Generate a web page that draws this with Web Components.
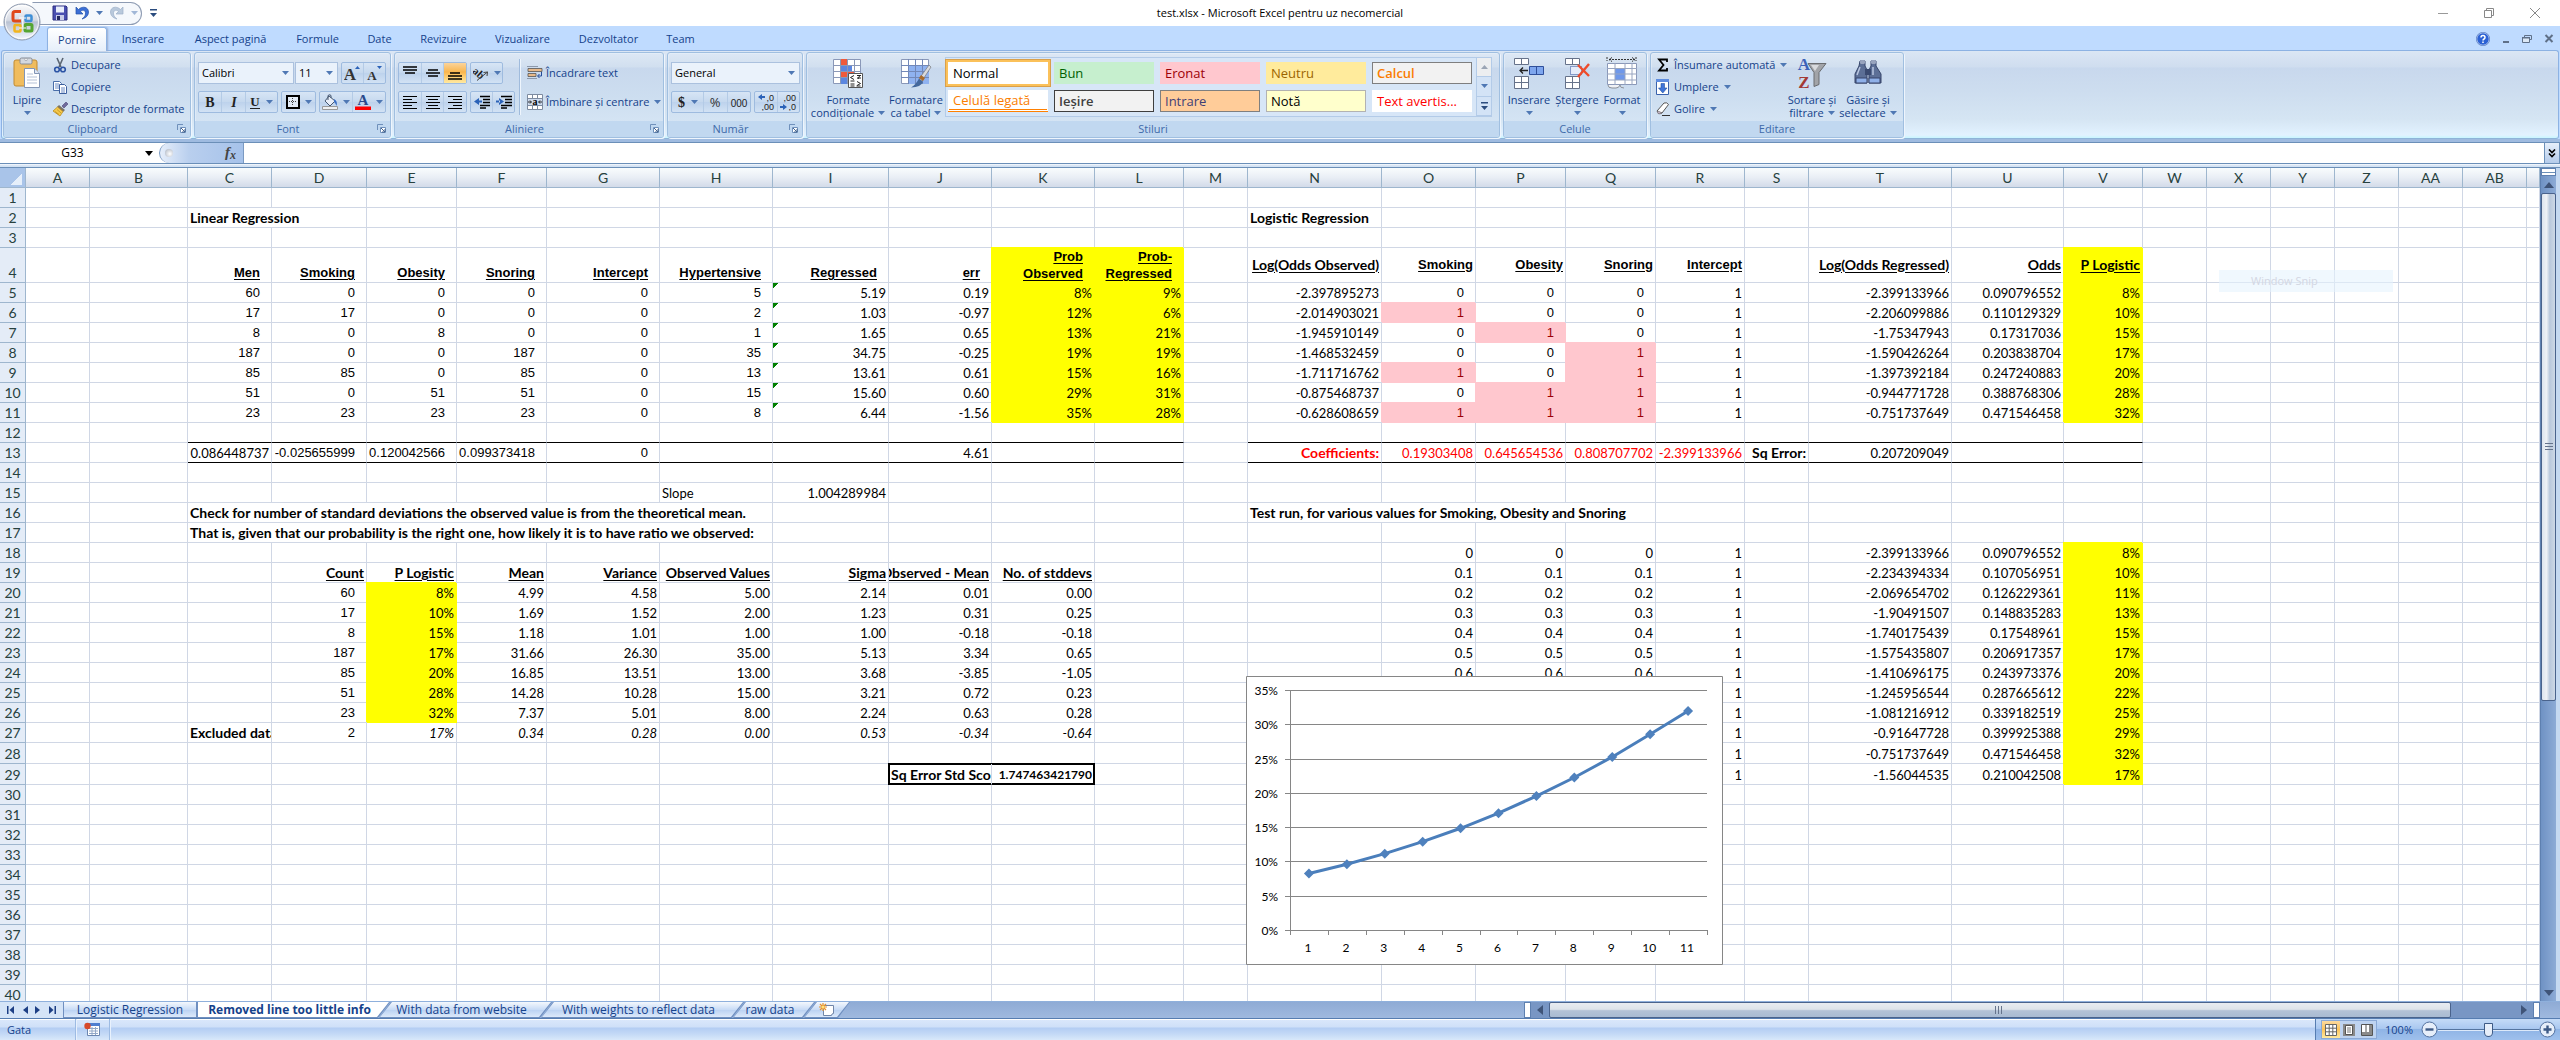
<!DOCTYPE html>
<html lang="ro">
<head>
<meta charset="utf-8">
<title>test.xlsx - Microsoft Excel pentru uz necomercial</title>
<style>
  html, body { margin: 0; height: 100%; overflow: hidden; }
  body {
    --ui: "Open Sans", "Noto Sans", sans-serif;
    --sheet: Lato, "Open Sans", sans-serif;
    --arial: "Liberation Sans", sans-serif;
    --ink: #15428b;
    font: 11px/14px var(--ui);
    color: var(--ink);
    background: #fff;
  }
</style>
</head>
<body>
<excel-window></excel-window>

<script>
const ICONS = {
  save: [16, 16, '<path d="M1 1h13l1 1v13H1z" fill="#4a4fb0" stroke="#2c2f80"/><path d="M4 1.500h8v6H4z" fill="#e9eefb"/><path d="M4 10h8v5H4z" fill="#c8cce8"/><path d="M5 11h3v4H5z" fill="#24285f"/>'],
  undo: [16, 16, '<path d="M2 2v7h7L6.500 6.500C9 4 12 5.500 11.500 9c-.3 2-1.500 3.500-3.500 5 4-1 6.500-3.500 6.500-7C14.500 2 8.500.5 4.500 4.500z" fill="#3b6fd6" stroke="#2450a8" stroke-width=".7"/>'],
  redo: [16, 16, '<path d="M14 2v7H7l2.500-2.500C7 4 4 5.500 4.500 9c.3 2 1.500 3.500 3.500 5-4-1-6.500-3.500-6.500-7C1.500 2 7.500.5 11.500 4.500z" fill="#b9c9dc" stroke="#9db0c8" stroke-width=".7"/>'],
  arrow: [7, 4, '<path d="M0 0h7L3.500 4z" fill="#4f78b4"/>'],
  blackarrow: [8, 5, '<path d="M0 0h8L4 5z" fill="#000"/>'],
  more: [7, 8, '<path d="M0 0h7v1.500H0zM0 4h7L3.500 8z" fill="#2b4c7e"/>'],
  office: [38, 38, '<defs><linearGradient id="g" x2="0" y2="1"><stop offset="0" stop-color="#fdfdfe"/><stop offset=".45" stop-color="#d5dae4"/><stop offset=".5" stop-color="#b9c2d2"/><stop offset="1" stop-color="#f4f8ff"/></linearGradient></defs><circle cx="19" cy="19" r="18" fill="url(#g)" stroke="#8b97ac"/><circle cx="19" cy="19" r="16.500" fill="none" stroke="#fff" opacity=".8"/><g fill="none" stroke-width="3"><path d="M18 8.500h-6q-2 0-2 2v5.500q0 2 2 2h6" stroke="#e0491b"/><rect x="22.500" y="12.500" width="6" height="5.500" rx="1" stroke="#3f8fd6" stroke-width="2.500"/><rect x="11.500" y="22" width="6" height="6.500" rx="1" stroke="#f2b51e" stroke-width="2.500"/><rect x="22" y="21.500" width="7" height="6.500" rx="1" stroke="#55a532"/></g><path d="M16 15h7M19.800 16v8M16 25h7" stroke="#fff" stroke-width="1.200"/>'],
  min: [12, 12, '<path d="M1 6.500h10" stroke="#999"/>'],
  restore: [12, 12, '<path d="M1.500 3.500h7v7h-7zM3.500 3V1.500h7v7H9" fill="none" stroke="#888"/>'],
  close: [12, 12, '<path d="M1 1l10 10M11 1L1 11" stroke="#888"/>'],
  help: [14, 14, '<circle cx="7" cy="7" r="6.300" fill="#2c62d4" stroke="#fff" stroke-width=".8"/><circle cx="7" cy="7" r="6.700" fill="none" stroke="#2a58b0" stroke-width=".6"/><path d="M5 5.500Q5 3.600 7 3.600t2 1.800q0 1-1 1.600T7 8.600M7 9.600v1.300" fill="none" stroke="#fff" stroke-width="1.500"/>'],
  mmin: [8, 8, '<path d="M1 6h6v2H1z" fill="#5f7088"/>'],
  mrestore: [10, 8, '<path d="M2.500 2V.5h7v4H8" fill="none" stroke="#5f7088"/><path d="M.5 2.500h7v5h-7z" fill="#dce8f6" stroke="#5f7088"/><path d="M0 2h8v1.500H0z" fill="#5f7088"/>'],
  mclose: [10, 9, '<path d="M1.500 1l7 7M8.500 1l-7 7" stroke="#5f7088" stroke-width="2"/>'],
  paste: [28, 32, '<rect x="1" y="3" width="23" height="26" rx="2" fill="#f0bc5e" stroke="#c08a32"/><rect x="7" y="1" width="12" height="6" rx="1.500" fill="#d4d8de" stroke="#868c96"/><circle cx="13" cy="2.500" r="1.200" fill="#fff" stroke="#868c96" stroke-width=".6"/><path d="M11.500 11.500h10l5 5v14h-15z" fill="#fff" stroke="#8295b5"/><path d="M21.500 11.500v5h5" fill="#dfe6f2" stroke="#8295b5"/><path d="M14 17h6M14 20h10M14 23h10M14 26h10" stroke="#b5c1d6"/>'],
  cut: [16, 16, '<path d="M5 1l4 9M11 1L7 10" stroke="#5b6572" stroke-width="1.600"/><circle cx="5" cy="12.500" r="2.300" fill="none" stroke="#2b53a4" stroke-width="1.600"/><circle cx="11" cy="12.500" r="2.300" fill="none" stroke="#2b53a4" stroke-width="1.600"/>'],
  copy: [16, 16, '<path d="M1.500 2.500h6l2 2v7h-8z" fill="#fff" stroke="#4a6ea9"/><path d="M3 5h4M3 7h5M3 9h5" stroke="#6c8cc4"/><path d="M7.500 5.500h5l2 2v7h-7z" fill="#fff" stroke="#3c5f9e"/><path d="M9 9h4M9 11h4M9 13h4" stroke="#6c8cc4"/>'],
  painter: [16, 16, '<path d="M10 5l4-4 2 2-4 4z" fill="#6f6a9b" stroke="#4a4578" stroke-width=".6"/><path d="M7 4l6 5-2 2-6-5z" fill="#7b7466"/><path d="M5.500 6l5.500 4.500L8 15 1 10z" fill="#f5c94b" stroke="#b98b1e" stroke-width=".8"/><path d="M3 10.500l4 3M5 8.500l4 3.500" stroke="#b98b1e" stroke-width=".7"/>'],
  bold: [12, 14, '<text x="6" y="12" font-family="Liberation Serif,serif" font-weight="bold" font-size="14" text-anchor="middle" fill="#222">B</text>'],
  italic: [12, 14, '<text x="6" y="12" font-family="Liberation Serif,serif" font-style="italic" font-weight="bold" font-size="14" text-anchor="middle" fill="#222">I</text>'],
  underline: [12, 14, '<text x="6" y="11" font-family="Liberation Serif,serif" font-weight="bold" font-size="13" text-anchor="middle" fill="#222">U</text><path d="M1 13.500h10" stroke="#222"/>'],
  grow: [17, 16, '<text x="6" y="15" font-family="Liberation Serif,serif" font-weight="bold" font-size="17" text-anchor="middle" fill="#333">A</text><path d="M11 4h5l-2.500-3z" fill="#2b62b8"/>'],
  shrink: [17, 16, '<text x="6" y="15" font-family="Liberation Serif,serif" font-weight="bold" font-size="13" text-anchor="middle" fill="#333">A</text><path d="M11 1h5l-2.500 3z" fill="#2b62b8"/>'],
  border: [14, 14, '<path d="M1 1h12v12H1z" fill="#fff" fill-opacity=".5" stroke="#000" stroke-width="2"/><path d="M6.500 3v8M3 6.500h8" stroke="#444" stroke-dasharray="1 1"/>'],
  fill: [16, 16, '<path d="M7 2l6 5-5 5-5-5z" fill="#e8eef8" stroke="#44566f"/><path d="M6 6V1.500q2-1.500 3 0V4" fill="none" stroke="#44566f"/><path d="M12 5q4 2 2.500 7-1-3-2.500-4z" fill="#3a6fc4"/><path d="M.5 12.500h15v3H.5z" fill="#eef0f2" stroke="#999"/>'],
  fontcolor: [16, 16, '<text x="8" y="11" font-family="Liberation Serif,serif" font-weight="bold" font-size="15" text-anchor="middle" fill="#2a4a8c">A</text><path d="M0 12.500h16v3.500H0z" fill="#f00"/>'],
  vtop: [14, 14, '<path d="M0 1h14M0 4h14M2 7h10" stroke="#000" stroke-width="1.600"/>'],
  vmid: [14, 14, '<path d="M2 4h10M0 7h14M2 10h10" stroke="#000" stroke-width="1.600"/>'],
  vbot: [14, 14, '<path d="M2 7h10M0 10h14M0 13h14" stroke="#000" stroke-width="1.600"/>'],
  left: [14, 14, '<path d="M0 1.500h14M0 4.500h9M0 7.500h14M0 10.500h9M0 13.500h14" stroke="#000"/>'],
  center: [14, 14, '<path d="M0 1.500h14M2 4.500h10M0 7.500h14M2 10.500h10M0 13.500h14" stroke="#000"/>'],
  right: [14, 14, '<path d="M0 1.500h14M5 4.500h9M0 7.500h14M5 10.500h9M0 13.500h14" stroke="#000"/>'],
  outdent: [16, 14, '<path d="M6 1.500h10M9 4.500h7M9 7.500h7M6 10.500h10M6 13h6" stroke="#000" stroke-width="1.500"/><path d="M5 3v7L0 6.500zM4 5.500h4v2H4z" fill="#2b62b8"/>'],
  indent: [16, 14, '<path d="M5 1.500h11M9 4.500h7M9 7.500h7M5 10.500h11M5 13h6" stroke="#000" stroke-width="1.500"/><path d="M3 3v7l5-3.500zM0 5.500h4v2H0z" fill="#2b62b8"/>'],
  orient: [16, 16, '<text x="0" y="12" font-family="Liberation Serif,serif" font-weight="bold" font-size="11" fill="#222" transform="rotate(42 6 8)">ab</text><path d="M4 15.500L14.500 7M14.500 7l-4 .5M14.500 7l-.5 4" stroke="#444" fill="none"/>'],
  wrap: [16, 16, '<path d="M0 1.500h11M0 13.500h10" stroke="#8d99ab"/><path d="M1 3.500h14v3H1zM1 8.500h8v3H1z" fill="#e8b98a" stroke="#555" stroke-width=".8"/><path d="M14.500 7v4H11M12.500 9l-2 2 2 2" fill="none" stroke="#234a98"/>'],
  merge: [16, 16, '<path d="M.5.5h15v15H.5zM.5 4.500h15M.5 11.500h15M5.500 0v4M10.500 0v4M5.500 12v4M10.500 12v4" fill="#fff" stroke="#7d8ba0"/><path d="M1 5h14v6H1z" fill="#cfdcf0"/><path d="M1 8h3M12 8h3M3 6.500L4.500 8 3 9.500M13 6.500L11.500 8 13 9.500" stroke="#222" fill="none"/><text x="8" y="11" font-family="Liberation Serif,serif" font-weight="bold" font-size="10" text-anchor="middle" fill="#000">a</text>'],
  launch: [9, 9, '<path d="M.5 6V.5H6" fill="none" stroke="#6f90bb"/><path d="M3.500 3.500h5v5h-5z" fill="#fff" stroke="#6f90bb"/><path d="M4 4l4 4V5M8 8H5" stroke="#45648f" fill="none"/>'],
  dollar: [9, 14, '<text x="4.500" y="12" font-family="Liberation Serif,serif" font-weight="bold" font-size="14" text-anchor="middle" fill="#222">$</text>'],
  percent: [14, 14, '<text x="7" y="12" font-family="Open Sans,sans-serif" font-size="13" text-anchor="middle" fill="#333">%</text>'],
  zeros: [18, 14, '<text x="9" y="12" font-family="Liberation Sans,sans-serif" font-size="10" text-anchor="middle" fill="#222">000</text>'],
  decinc: [18, 18, '<text x="17" y="8" font-family="Liberation Sans,sans-serif" font-size="9" text-anchor="end" fill="#222">,0</text><text x="17" y="17" font-family="Liberation Sans,sans-serif" font-size="9" text-anchor="end" fill="#222">,00</text><path d="M1 4l4-3v2h3v2H5v2z" fill="#2b62b8"/>'],
  decdec: [18, 18, '<text x="17" y="8" font-family="Liberation Sans,sans-serif" font-size="9" text-anchor="end" fill="#222">,00</text><text x="17" y="17" font-family="Liberation Sans,sans-serif" font-size="9" text-anchor="end" fill="#222">,0</text><path d="M8 14l-4-3v2H1v2h3v2z" fill="#2b62b8"/>'],
  condfmt: [32, 32, '<path d="M1.500 2.500h27v24h-27z" fill="#fff" stroke="#8a98b8"/><path d="M8 2h7v6H8zM8 14h14v6H8z" fill="#ef5a3c"/><path d="M8 8h12v6H8zM8 20h7v7H8z" fill="#5b86e0"/><path d="M1 8.500h28M1 14.500h28M1 20.500h28M8.500 2v25M15.500 2v25M22.500 2v25" stroke="#8a98b8"/><path d="M16.500 16.500h14v14h-14z" fill="#fff" stroke="#555"/><path d="M22 18.500l-3.500 2 3.500 2M18.500 24h4M25 18.500h4M25 21h4M28 18l-2 4M25 24.500l3.500 2-3.500 2M18.500 27h4M18.500 29h4M24.500 29h4" stroke="#222" fill="none"/>'],
  fmttable: [32, 32, '<path d="M1.500 2.500h27v24h-27z" fill="#fff" stroke="#8a98b8"/><path d="M8 8h21v19H8z" fill="#8fb2f0"/><path d="M1 8.500h28M1 14.500h28M1 20.500h28M8.500 2v25M15.500 2v25M22.500 2v25" stroke="#7288b8"/><path d="M29 8l2 2-9 14-3-2z" fill="#d9dade" stroke="#77787c" stroke-width=".7"/><path d="M19 21.500l4 3.500q-2 5-12 5.500 5-3 8-9z" fill="#44689c"/><path d="M21 18l4 3-2 3-4-3z" fill="#a86b2d"/>'],
  insert: [32, 32, '<path d="M1.500 1.500h14v6h-14zM8.500 1.500v6M1.500 19.500h14v12h-14zM8.500 19.500v12M1.500 25.500h14" fill="#fff" stroke="#66728a"/><path d="M16.500 9.500h14v8h-14z" fill="#7ea6ee" stroke="#2f4f9a"/><path d="M23.500 9.500v8" stroke="#2f4f9a"/><path d="M15 13.500H7M10 10.500l-3 3 3 3" stroke="#222" fill="none" stroke-width="1.300"/>'],
  delete: [28, 32, '<path d="M2.500 1.500h14v6h-14zM9.500 1.500v6M2.500 19.500h14v12h-14zM9.500 19.500v12M2.500 25.500h14" fill="#fff" stroke="#66728a"/><path d="M7.500 9.500h11v8h-11z" fill="#e4ecfa" stroke="#2f4f9a" stroke-dasharray="1 1"/><path d="M15 8l11 11M26 7L15 20" stroke="#ee4b2b" stroke-width="2.400"/>'],
  format: [32, 32, '<path d="M1 0v4M30 0v4M3 2.500h26M6 .5l-3 2 3 2M26 .5l3 2-3 2" stroke="#333" fill="none" stroke-dasharray="2 1"/><path d="M1.500 6.500h29v21h-29z" fill="#fff" stroke="#8a98b8"/><path d="M9 11h10v12H9z" fill="#6f98ea"/><path d="M1 11.500h30M1 17h30M1 23h30M9 6v22M19 6v22M26 6v22" stroke="#98a5c0"/><path d="M2 28q0 3 4 3h4q3 0 4-3M14 28q0 3 4 3" fill="#f0f2f6" stroke="#8a8f98"/>'],
  sigma: [16, 16, '<path d="M12 5V2.500H4L8.500 8 4 13.500h8V11" fill="none" stroke="#000" stroke-width="1.800"/>'],
  down: [16, 16, '<path d="M1.500.5h12v15h-12z" fill="#fff" stroke="#3a62ac"/><path d="M1 0h13v3H1z" fill="#5f8de0"/><path d="M6 4.500h3.500V9H12l-4.200 5L3.500 9H6z" fill="#3f74d8" stroke="#24519e" stroke-width=".6"/>'],
  eraser: [16, 16, '<path d="M2 10L9 2q3-1 4.500 1.500L7 12q-3 1.500-5-2z" fill="#fff" stroke="#555"/><path d="M2 10q2 0 5 2-2 1.500-4 .500z" fill="#c9b7c9" stroke="#555" stroke-width=".6"/><path d="M7 14.500h8" stroke="#333"/>'],
  sort: [30, 34, '<text x="7" y="14" font-family="Liberation Serif,serif" font-weight="bold" font-size="17" text-anchor="middle" fill="#3c62b8">A</text><text x="7" y="32" font-family="Liberation Serif,serif" font-weight="bold" font-size="17" text-anchor="middle" fill="#a33a36">Z</text><path d="M11 7.500h18l-7 9v12l-5 2V16.500z" fill="#a2a4a8" stroke="#6a6c70"/><path d="M14 9h8l-4 6z" fill="#d8dadd"/>'],
  find: [30, 32, '<path d="M7 4h5v5l2 4v13H2V17L6 9zM18 4h5v5l5 8v9H16V13l2-4z" fill="#5c6f96" stroke="#36456a"/><path d="M12 12h6v6h-6z" fill="#3a4a70"/><path d="M3 21h11v5H3zM16 21h11v5H16z" fill="#8fb0e8" stroke="#36456a"/><path d="M7 10l-3 8M20 10l0 8" stroke="#b9c6e0" stroke-width="1.500"/><rect x="7" y="3" width="5" height="4" rx="1.500" fill="#98a4be"/><rect x="18" y="3" width="5" height="4" rx="1.500" fill="#98a4be"/>'],
  gup: [7, 4, '<path d="M0 4h7L3.500 0z" fill="#9aa5b5"/>'],
  fx: [14, 16, '<text x="1" y="12" font-family="Liberation Serif,serif" font-style="italic" font-weight="bold" font-size="15" fill="#444">f</text><text x="6" y="14" font-family="Liberation Serif,serif" font-style="italic" font-weight="bold" font-size="12" fill="#444">x</text>'],
  expand: [8, 9, '<path d="M1 .5l3 3 3-3M1 4.500l3 3 3-3" fill="none" stroke="#000" stroke-width="1.600"/>'],
  first: [8, 8, '<path d="M0 0h1.500v8H0zM7 0v8L2.500 4z" fill="#1d3f85"/>'],
  prev: [5, 8, '<path d="M5 0v8L0 4z" fill="#1d3f85"/>'],
  next: [5, 8, '<path d="M0 0v8l5-4z" fill="#1d3f85"/>'],
  last: [8, 8, '<path d="M6.500 0H8v8H6.500zM1 0v8l4.500-4z" fill="#1d3f85"/>'],
  newsheet: [16, 13, '<path d="M4.500 2.500h10v8q-2 0-2 2h-8z" fill="#fff" stroke="#7186a8"/><path d="M4 0v8M0 4h8M1 1l6 6M7 1L1 7" stroke="#e8912a" stroke-width="1.200"/><circle cx="4" cy="4" r="1.500" fill="#ffe27a"/>'],
  macro: [16, 15, '<path d="M3.500 1.500h12v12h-12z" fill="#fff" stroke="#6b86b0"/><path d="M3 1h13v3H3z" fill="#4f7ed0"/><path d="M5 6.500h9M5 9h9M5 11.500h9M8 5v8M11.500 5v8" stroke="#93a8c8"/><circle cx="3.500" cy="4" r="3.200" fill="#d6492a"/>'],
  vnormal: [12, 12, '<path d="M.5.5h11v11H.5zM.5 4.200h11M.5 7.800h11M4.200.5v11M7.800.5v11" fill="#fff" stroke="#666"/>'],
  vpage: [12, 12, '<path d="M0 0h12v12H0z" fill="#8a8a8a"/><path d="M2.500 1.500h7v9h-7z" fill="#fff" stroke="#555"/><path d="M4 4h4M4 6h4M4 8h4" stroke="#777"/>'],
  vbreak: [12, 12, '<path d="M.5.5h11v11H.5z" fill="#fff" stroke="#555"/><path d="M1 8h10v3H1zM8 1h3v10H8z" fill="#8a8a8a"/><path d="M5 0v8" stroke="#555"/>'],
  minus: [17, 17, '<circle cx="8.500" cy="8.500" r="7.500" fill="#e6eefa" stroke="#53719f"/><path d="M4.500 8.500h8" stroke="#3d5a86" stroke-width="2.400"/>'],
  plus: [17, 17, '<circle cx="8.500" cy="8.500" r="7.500" fill="#e6eefa" stroke="#53719f"/><path d="M4.500 8.500h8M8.500 4.500v8" stroke="#3d5a86" stroke-width="2.400"/>'],
  sup: [10, 6, '<path d="M0 6h10L5 0z" fill="#3f5478"/>'],
  sdown: [10, 6, '<path d="M0 0h10L5 6z" fill="#3f5478"/>'],
  sleft: [6, 10, '<path d="M6 0v10L0 5z" fill="#3f5478"/>'],
  sright: [6, 10, '<path d="M0 0v10l6-5z" fill="#3f5478"/>'],
};

function component(name, html, setup) {
  const tpl = document.createElement('template');
  tpl.innerHTML = html;
  customElements.define(name, class extends HTMLElement {
    connectedCallback() {
      if (this.shadowRoot) return;
      const root = this.attachShadow({ mode: 'open' });
      root.append(tpl.content.cloneNode(true));
      if (setup) setup.call(this, root);
    }
  });
}
const RESET = `*{box-sizing:border-box} button,input,select{font:inherit;color:inherit;margin:0;padding:0;border:0;background:none;border-radius:0;outline:0}`;

component('xl-icon', `<style>:host{display:inline-flex;flex:none}svg{display:block}</style>`, function (root) {
  const [w, h, body] = ICONS[this.getAttribute('name')];
  const holder = document.createElement('template');
  holder.innerHTML = `<svg width="${w}" height="${h}" viewBox="0 0 ${w} ${h}" aria-hidden="true">${body}</svg>`;
  root.append(holder.content);
});

/* Title bar */
component('title-bar', `<style>${RESET}
  :host{display:grid;grid-template-columns:1fr auto 1fr;height:26px;background:#fff;align-items:center}
  .qat{display:flex;align-items:center;margin-left:32px}
  .pill{display:flex;align-items:center;gap:6px;height:23px;width:110px;padding:0 0 0 19px;border:1px solid #8d9bb3;border-radius:0 12px 12px 0;background:#f5f8fc;border-left-color:transparent}
  .pill button,.more{display:flex}
  .more{margin-left:8px}
  h1{margin:0;font:11px/16px var(--ui);color:#000}
  .win{display:flex;justify-content:flex-end;padding-right:2px}
  .win button{width:46px;height:24px;display:flex;align-items:center;justify-content:center}
</style>
<div class="qat"><div class="pill"><button aria-label="Salvare"><xl-icon name="save"></xl-icon></button><button aria-label="Anulare"><xl-icon name="undo"></xl-icon></button><xl-icon name="arrow"></xl-icon><button aria-label="Refacere"><xl-icon name="redo"></xl-icon></button><xl-icon name="arrow" style="opacity:.5"></xl-icon></div><button class="more" aria-label="Particularizare"><xl-icon name="more"></xl-icon></button></div>
<h1>test.xlsx - Microsoft Excel pentru uz necomercial</h1>
<div class="win"><button aria-label="Minimizare"><xl-icon name="min"></xl-icon></button><button aria-label="Restaurare"><xl-icon name="restore"></xl-icon></button><button aria-label="Închidere"><xl-icon name="close"></xl-icon></button></div>`);

/* Ribbon tabs */
component('ribbon-tabs', `<style>${RESET}
  :host{display:flex;height:24px;background:#bfdbff;padding-left:47px;align-items:flex-end}
  button{height:23px;text-align:center}
  .on{background:linear-gradient(#fff,#e6effa);border:1px solid #8db2e3;border-bottom:0;border-radius:3px 3px 0 0;margin-bottom:-1px;height:24px;box-shadow:1px 0 2px #9ac;position:relative}
  .mdi{margin-left:auto;display:flex;align-items:center;gap:12px;padding-right:6px;height:23px}
  .mdi button{display:flex;align-items:center;height:auto}
</style><div class="mdi"><button aria-label="Ajutor"><xl-icon name="help"></xl-icon></button><button aria-label="Minimizare registru"><xl-icon name="mmin"></xl-icon></button><button aria-label="Restaurare registru"><xl-icon name="mrestore"></xl-icon></button><button aria-label="Închidere registru"><xl-icon name="mclose"></xl-icon></button></div>`, function (root) {
  const mdi = root.querySelector('.mdi');
  [['Pornire', 60], ['Inserare', 72], ['Aspect pagină', 103], ['Formule', 71], ['Date', 53], ['Revizuire', 75], ['Vizualizare', 83], ['Dezvoltator', 89], ['Team', 55]].forEach(([t, w], i) => {
    const b = document.createElement('button');
    b.textContent = t; b.style.width = w + 'px'; if (!i) b.className = 'on';
    mdi.before(b);
  });
});

/* Ribbon pieces */
component('ribbon-group', `<style>${RESET}
  :host{display:flex;flex-direction:column;flex:none;border:1px solid #a0bfe0;border-radius:3px;box-shadow:1px 1px 0 #eef5fd,inset 1px 1px 0 #e9f1fb80;height:86px;overflow:hidden;background:linear-gradient(#dde8f5 0,#d1dfef 14px,#c8d8ed 15px,#cddef0 45px,#d9e8f6 100%)}
  .body{flex:1;display:flex;min-height:0}
  footer{height:16px;background:#c1d8f0;display:flex;align-items:center;color:#3e6aaa;padding:0 4px}
  footer span{flex:1;text-align:center}
</style><div class="body"><slot></slot></div><footer><span></span></footer>`, function (root) {
  root.querySelector('span').textContent = this.getAttribute('label');
  if (this.hasAttribute('launch')) root.querySelector('footer').insertAdjacentHTML('beforeend', '<button aria-label="Opțiuni"><xl-icon name="launch"></xl-icon></button>');
});
component('big-button', `<style>${RESET}
  :host{display:block;flex:none}
  button{display:flex;flex-direction:column;align-items:center;width:100%;height:100%;padding-top:4px}
  .ic{height:32px;display:flex;align-items:center}
  .t{line-height:13px;padding-top:4px;white-space:nowrap;text-align:center}
  .l2{display:flex;align-items:center;gap:4px;line-height:13px;height:13px;white-space:nowrap}
</style><button><span class="ic"></span><span class="t"></span><span class="l2"></span></button>`, function (root) {
  root.querySelector('.ic').innerHTML = `<xl-icon name="${this.getAttribute('icon')}"></xl-icon>`;
  root.querySelector('.t').textContent = this.getAttribute('top');
  root.querySelector('.l2').innerHTML = (this.hasAttribute('bottom') ? `<span>${this.getAttribute('bottom')}</span>` : '') + '<xl-icon name="arrow"></xl-icon>';
});
component('line-button', `<style>${RESET}
  :host{display:block}
  button{display:flex;align-items:center;gap:3px;height:22px;white-space:nowrap}
  .a{margin-left:2px}
</style><button><span class="i" style="display:flex"></span><slot></slot></button>`, function (root) {
  root.querySelector('.i').innerHTML = `<xl-icon name="${this.getAttribute('icon')}"></xl-icon>`;
  if (this.hasAttribute('menu')) root.querySelector('button').insertAdjacentHTML('beforeend', '<xl-icon class="a" name="arrow"></xl-icon>');
});
component('button-set', `<style>${RESET}
  :host{display:flex;flex:none;height:22px;border:1px solid #9ebbdf;border-radius:2px;background:linear-gradient(#d7e5f5,#c5d8ee 50%,#bdd2ec 51%,#d2e2f4)}
  button{flex:1;display:flex;align-items:center;justify-content:center;gap:5px}
  button+button{border-left:1px solid #b4cbe6}
  .on{background:linear-gradient(#fbd49b,#f9b54d 45%,#fdc665 60%,#ffe9a0)}
</style>`, function (root) {
  this.getAttribute('items').split(' ').forEach(n => {
    const b = document.createElement('button');
    if (n.endsWith('*')) { b.className = 'on'; n = n.slice(0, -1); }
    const menu = n.endsWith('+'); if (menu) n = n.slice(0, -1);
    b.setAttribute('aria-label', n);
    b.innerHTML = `<xl-icon name="${n}"></xl-icon>` + (menu ? '<xl-icon name="arrow"></xl-icon>' : '');
    if (menu) b.style.flexGrow = 1.4;
    root.append(b);
  });
});
component('combo-box', `<style>${RESET}
  :host{display:block;flex:none;height:22px}
  label{display:flex;align-items:center;height:100%;background:#eaf2fb;border:1px solid #abc1de;padding:0 4px 0 3px}
  select{appearance:none;flex:1;min-width:0;color:#000}
</style><label><select></select><xl-icon name="arrow"></xl-icon></label>`, function (root) {
  const s = root.querySelector('select');
  s.setAttribute('aria-label', this.getAttribute('label'));
  s.add(new Option(this.getAttribute('value')));
});
component('style-gallery', `<style>${RESET}
  :host{display:flex;flex:none;width:547px;height:60px;border:1px solid #b3cbe8;background:#d7e6f7;font-size:13px;line-height:18px}
  .cells{display:grid;grid-template-columns:repeat(5,100px);grid-auto-rows:22px;gap:6px;padding:4px 0 0 2px;flex:1}
  button.s{text-align:left;padding-left:4px;border:1px solid transparent}
  .scroll{width:15px;display:flex;flex-direction:column}
  .scroll button{flex:1;display:flex;align-items:center;justify-content:center;border:1px solid #b3cbe8;border-width:0 0 1px 1px;background:#d3e3f6}
  .scroll button:first-child{background:#eceef0}
</style><div class="cells">
<button class="s" style="background:#fff;color:#000;box-shadow:0 0 0 2px #fbc15a,0 0 0 3px #d9a04c">Normal</button>
<button class="s" style="background:#c6efce;color:#006100">Bun</button>
<button class="s" style="background:#ffc7ce;color:#9c0006">Eronat</button>
<button class="s" style="background:#ffeb9c;color:#9c6500">Neutru</button>
<button class="s" style="background:#f2f2f2;color:#fa7d00;border-color:#7f7f7f;font-weight:600">Calcul</button>
<button class="s" style="background:#fff;color:#fa7d00;border-bottom:3px double #ff8001">Celulă legată</button>
<button class="s" style="background:#f2f2f2;color:#3f3f3f;border-color:#3f3f3f;font-weight:600">Ieșire</button>
<button class="s" style="background:#ffcc99;color:#3f3f76;border-color:#7f7f7f">Intrare</button>
<button class="s" style="background:#ffffcc;color:#000;border-color:#b2b2b2">Notă</button>
<button class="s" style="background:#fff;color:#f00">Text avertis...</button>
</div><div class="scroll"><button aria-label="Sus"><xl-icon name="gup"></xl-icon></button><button aria-label="Jos"><xl-icon name="arrow"></xl-icon></button><button aria-label="Mai multe"><xl-icon name="more"></xl-icon></button></div>`);

component('ribbon-bar', `<style>${RESET}
  :host{display:block;background:#bfdbff;padding:0 1px}
  .bar{display:flex;align-items:flex-start;gap:3px;height:89px;padding:1px 1px 0;border:1px solid #8db2e3;border-bottom-color:#8fb4d8;border-radius:3px;background:linear-gradient(#dbe6f4 0,#cfddef 16px,#c8d8ed 17px,#cdddef 40px,#d5e5f3 68px,#e2f2ff 84px,#c8f6ff 100%)}
  .under{height:3px;background:#9fbbe0;margin:0 -1px}
  .col{display:flex;flex-direction:column}
  .row{display:flex}
  .two{gap:7px;padding:9px 0 0 3px}
  .two .row{gap:3px}
  .three{padding-top:1px}
  .sep{width:1px;background:#eef5fd;box-shadow:-1px 0 0 #a0bbdc;margin:6px 0}
</style>
<div class="bar">
 <ribbon-group label="Clipboard" launch style="width:188px">
  <big-button icon="paste" top="Lipire" style="width:46px"></big-button>
  <div class="col three" style="padding-left:2px"><line-button icon="cut">Decupare</line-button><line-button icon="copy">Copiere</line-button><line-button icon="painter">Descriptor de formate</line-button></div>
 </ribbon-group>
 <ribbon-group label="Font" launch style="width:197px">
  <div class="col two">
   <div class="row"><combo-box label="Font" value="Calibri" style="width:96px"></combo-box><combo-box label="Dimensiune" value="11" style="width:43px;margin-left:-2px"></combo-box><button-set items="grow shrink" style="width:45px"></button-set></div>
   <div class="row"><button-set items="bold italic underline+" style="width:80px"></button-set><button-set items="border+" style="width:35px"></button-set><button-set items="fill+ fontcolor+" style="width:67px"></button-set></div>
  </div>
 </ribbon-group>
 <ribbon-group label="Aliniere" launch style="width:270px">
  <div class="col two">
   <div class="row"><button-set items="vtop vmid vbot*" style="width:69px"></button-set><button-set items="orient+" style="width:33px"></button-set></div>
   <div class="row"><button-set items="left center right" style="width:69px"></button-set><button-set items="outdent indent" style="width:45px"></button-set></div>
  </div>
  <div class="sep" style="margin-left:5px"></div>
  <div class="col" style="gap:7px;padding:9px 0 0 6px"><line-button icon="wrap">Încadrare text</line-button><line-button icon="merge" menu>Îmbinare și centrare</line-button></div>
 </ribbon-group>
 <ribbon-group label="Număr" launch style="width:136px">
  <div class="col two">
   <div class="row"><combo-box label="Format" value="General" style="width:129px"></combo-box></div>
   <div class="row"><button-set items="dollar+ percent zeros" style="width:80px"></button-set><button-set items="decinc decdec" style="width:46px"></button-set></div>
  </div>
 </ribbon-group>
 <ribbon-group label="Stiluri" style="width:694px">
  <big-button icon="condfmt" top="Formate" bottom="condiționale" style="width:78px;margin-left:2px"></big-button>
  <big-button icon="fmttable" top="Formatare" bottom="ca tabel" style="width:58px"></big-button>
  <style-gallery style="margin-top:4px"></style-gallery>
 </ribbon-group>
 <ribbon-group label="Celule" style="width:144px">
  <big-button icon="insert" top="Inserare" style="width:50px"></big-button>
  <big-button icon="delete" top="Ștergere" style="width:46px"></big-button>
  <big-button icon="format" top="Format" style="width:44px"></big-button>
 </ribbon-group>
 <ribbon-group label="Editare" style="width:254px">
  <div class="col three" style="width:132px;padding-left:4px"><line-button icon="sigma" menu>Însumare automată</line-button><line-button icon="down" menu>Umplere</line-button><line-button icon="eraser" menu>Golire</line-button></div>
  <big-button icon="sort" top="Sortare și" bottom="filtrare" style="width:58px"></big-button>
  <big-button icon="find" top="Găsire și" bottom="selectare" style="width:54px"></big-button>
 </ribbon-group>
</div><div class="under"></div>`);

/* Formula bar */
component('formula-bar', `<style>${RESET}
  :host{display:flex;height:25px;border:1px solid #6b8fb8;border-width:1px 0 0;background:linear-gradient(#fff 20px,#6b8fb8 20px,#6b8fb8 21px,#fff 21px,#dce8f6 22px,#cfdff2 100%);color:#000}
  .name{display:flex;align-items:center;width:158px;height:20px;background:#fff}
  .name input{width:145px;text-align:center;font-size:12px}
  .oval{margin-left:1px;width:85px;height:20px;border:1px solid #7b9ac2;border-top:0;border-bottom:0;border-radius:10px 0 0 10px;background:linear-gradient(90deg,#e6eefa,#b9cfee 35%,#a6c2ea);display:flex;align-items:center;justify-content:space-between;padding:0 5px}
  .dot{width:8px;height:8px;border-radius:4px;background:radial-gradient(circle at 60% 60%,#fff,#a7afbd)}
  .f{flex:1;height:20px;padding:0 4px}
  .x{width:16px;height:20px;display:flex;align-items:center;justify-content:center;border:1px solid #6b8fb8;border-width:0 1px;background:linear-gradient(#e6effb,#b4cbea)}
</style><div class="name"><input aria-label="Casetă nume" value="G33"><xl-icon name="blackarrow"></xl-icon></div><div class="oval"><span class="dot"></span><button aria-label="Inserare funcție" style="display:flex"><xl-icon name="fx"></xl-icon></button></div><input class="f" aria-label="Bară de formule"><button class="x" aria-label="Extindere"><xl-icon name="expand"></xl-icon></button>`);

/* Chart */
component('line-chart', `<style>:host{display:block}svg{display:block;font:12px var(--sheet)}</style>`, function (root) {
  const left = 44, right = 461, base = 254, step = 34.300, slot = (right - left) / 11;
  const vals = [8.3, 9.65, 11.2, 12.95, 14.9, 17.1, 19.6, 22.3, 25.3, 28.6, 32];
  let g = '<path d="M.5.5h476v288H.5z" fill="#fff" stroke="#868686"/>';
  for (let i = 0; i <= 7; i++) {
    const y = Math.round(base - i * step) + .5;
    g += `<path d="M${left - 5} ${y}H${right}" stroke="#868686"/><text x="32" y="${y + 4}" text-anchor="end">${i * 5}%</text>`;
  }
  g += `<path d="M${left + .5} ${Math.round(base - 7 * step)}V${base + 5}" stroke="#868686"/>`;
  const pts = vals.map((v, i) => [left + slot * (i + .5), base + .5 - v / 5 * step]);
  for (let i = 0; i < 11; i++) {
    g += `<path d="M${Math.round(left + slot * (i + 1)) + .5} ${base}v5" stroke="#868686"/><text x="${pts[i][0] - 1}" y="276" text-anchor="middle">${i + 1}</text>`;
  }
  g += `<polyline points="${pts.join(' ')}" fill="none" stroke="#4a7ebb" stroke-width="3"/>`;
  pts.forEach(([x, y]) => { g += `<path d="M${x} ${y - 5}l5 5-5 5-5-5z" fill="#4f81bd"/>`; });
  const t = document.createElement('template');
  t.innerHTML = `<svg width="477" height="289" viewBox="0 0 477 289" fill="#000" role="img" aria-label="P Logistic">${g}</svg>`;
  root.append(t.content);
});

/* Worksheet */
const COLS = 'A B C D E F G H I J K L M N O P Q R S T U V W X Y Z AA AB'.split(' ');
const WIDTHS = [64, 98, 84, 95, 90, 90, 113, 113, 116, 103, 103, 89, 64, 134, 94, 90, 90, 89, 64, 143, 112, 79, 64, 64, 64, 64, 64, 64];
const CELLS = {};
const put = (col, row, text, cls = '', span = 1) => { CELLS[col + row] = { text, cls, span }; };
const down = (col, row, list, cls) => list.split(' ').forEach((t, i) => put(col, row + i, t, cls));
put('C', 2, 'Linear Regression', 'l b', 2);
put('N', 2, 'Logistic Regression', 'l b');
[['C', 'Men'], ['D', 'Smoking'], ['E', 'Obesity'], ['F', 'Snoring'], ['G', 'Intercept'], ['H', 'Hypertensive'], ['I', 'Regressed'], ['J', 'err']].forEach(([c, t]) => put(c, 4, t, 'a n b u'));
put('K', 4, 'Prob Observed', 'a n b u y w'); put('L', 4, 'Prob-Regressed', 'a n b u y w');
[['N', 'Log(Odds Observed)'], ['T', 'Log(Odds Regressed)'], ['U', 'Odds']].forEach(([c, t]) => put(c, 4, t, 'b u m'));
[['O', 'Smoking'], ['P', 'Obesity'], ['Q', 'Snoring'], ['R', 'Intercept']].forEach(([c, t]) => put(c, 4, t, 'a b u m'));
put('V', 4, 'P Logistic', 'b u m y');
down('C', 5, '60 17 8 187 85 51 23', 'a n');
down('D', 5, '0 17 0 0 85 0 23', 'a n');
down('E', 5, '0 0 8 0 0 51 23', 'a n');
down('F', 5, '0 0 0 187 85 51 23', 'a n');
down('G', 5, '0 0 0 0 0 0 0', 'a n');
down('H', 5, '5 2 1 35 13 15 8', 'a n');
down('I', 5, '5.19 1.03 1.65 34.75 13.61 15.60 6.44', 'g');
down('J', 5, '0.19 -0.97 0.65 -0.25 0.61 0.60 -1.56');
down('K', 5, '8% 12% 13% 19% 15% 29% 35%', 'y');
down('L', 5, '9% 6% 21% 19% 16% 31% 28%', 'y');
down('N', 5, '-2.397895273 -2.014903021 -1.945910149 -1.468532459 -1.711716762 -0.875468737 -0.628608659');
down('O', 5, '0 1 0 0 1 0 1', 'a n flag');
down('P', 5, '0 0 1 0 0 1 1', 'a n flag');
down('Q', 5, '0 0 0 1 1 1 1', 'a n flag');
down('R', 5, '1 1 1 1 1 1 1');
down('T', 5, '-2.399133966 -2.206099886 -1.75347943 -1.590426264 -1.397392184 -0.944771728 -0.751737649');
down('U', 5, '0.090796552 0.110129329 0.17317036 0.203838704 0.247240883 0.388768306 0.471546458');
down('V', 5, '8% 10% 15% 17% 20% 28% 32%', 'y');
put('C', 13, '0.086448737'); put('D', 13, '-0.025655999', 'a n'); put('E', 13, '0.120042566', 'a n'); put('F', 13, '0.099373418', 'a n'); put('G', 13, '0', 'a n'); put('J', 13, '4.61');
put('N', 13, 'Coefficients:', 'b red'); put('O', 13, '0.19303408', 'red'); put('P', 13, '0.645654536', 'red'); put('Q', 13, '0.808707702', 'red'); put('R', 13, '-2.399133966', 'red');
put('S', 13, 'Sq Error:', 'b'); put('T', 13, '0.207209049');
put('H', 15, 'Slope', 'l'); put('I', 15, '1.004289984');
put('C', 16, 'Check for number of standard deviations the observed value is from the theoretical mean.', 'l b', 6);
put('C', 17, 'That is, given that our probability is the right one, how likely it is to have ratio we observed:', 'l b', 6);
put('N', 16, 'Test run, for various values for Smoking, Obesity and Snoring', 'l b', 4);
[['D', 'Count'], ['E', 'P Logistic'], ['F', 'Mean'], ['G', 'Variance'], ['H', 'Observed Values'], ['I', 'Sigma'], ['J', 'Observed - Mean'], ['K', 'No. of stddevs']].forEach(([c, t]) => put(c, 19, t, 'b u' + (c === 'J' ? ' clip' : '')));
down('D', 20, '60 17 8 187 85 51 23 2', 'a n');
down('E', 20, '8% 10% 15% 17% 20% 28% 32%', 'y');
down('F', 20, '4.99 1.69 1.18 31.66 16.85 14.28 7.37');
down('G', 20, '4.58 1.52 1.01 26.30 13.51 10.28 5.01');
down('H', 20, '5.00 2.00 1.00 35.00 13.00 15.00 8.00');
down('I', 20, '2.14 1.23 1.00 5.13 3.68 3.21 2.24');
down('J', 20, '0.01 0.31 -0.18 3.34 -3.85 0.72 0.63');
down('K', 20, '0.00 0.25 -0.18 0.65 -1.05 0.23 0.28');
put('C', 27, 'Excluded data', 'l b');
[['E', '17%'], ['F', '0.34'], ['G', '0.28'], ['H', '0.00'], ['I', '0.53'], ['J', '-0.34'], ['K', '-0.64']].forEach(([c, t]) => put(c, 27, t, 'i'));
put('J', 29, 'Sq Error Std Score', 'l b bx bl'); put('K', 29, '1.747463421790', 'b num bx br');
const tenths = '0 0.1 0.2 0.3 0.4 0.5 0.6 0.7 0.8 0.9 1';
['O', 'P', 'Q'].forEach(c => down(c, 18, tenths));
down('R', 18, '1 1 1 1 1 1 1 1 1 1 1 1');
down('T', 18, '-2.399133966 -2.234394334 -2.069654702 -1.90491507 -1.740175439 -1.575435807 -1.410696175 -1.245956544 -1.081216912 -0.91647728 -0.751737649 -1.56044535');
down('U', 18, '0.090796552 0.107056951 0.126229361 0.148835283 0.17548961 0.206917357 0.243973376 0.287665612 0.339182519 0.399925388 0.471546458 0.210042508');
down('V', 18, '8% 10% 11% 13% 15% 17% 20% 22% 25% 29% 32% 17%', 'y');

component('work-sheet', `<style>${RESET}
  :host{display:block;position:relative;overflow:hidden;flex:1;min-width:0;background:#fff;color:#000}
  table{table-layout:fixed;border-collapse:separate;border-spacing:0;width:100%;font:13px/16px var(--sheet)}
  th{font-weight:400;color:#27413e;border:0 solid #9eb6ce;border-width:0 1px 1px 0;padding:0;font-size:14px;overflow:hidden}
  thead th{height:20px;background:linear-gradient(#f9fcfd,#e9eef5 50%,#d3dbe9)}
  thead th:first-child{background:linear-gradient(135deg,transparent 62%,#e6effa 62%) 8px 2px/14px 15px no-repeat,#a9c4e9}
  tbody th{background:#e4ecf7;vertical-align:bottom;padding-bottom:1px}
  td{height:20px;border:0 solid #d0d7e5;border-width:0 1px 1px 0;padding:0 2px 1px 2px;text-align:right;vertical-align:bottom;white-space:nowrap;overflow:hidden}
  .h20 td{height:20px}.h21 td{height:21px}.h35 td{height:35px}
  .b{font-weight:700;font-size:14px}
  .num{font-size:12px}
  .a{font-family:var(--arial);font-size:13px}
  .n{padding-right:11px}
  .l{text-align:left}
  .u{text-decoration:underline;text-underline-offset:2px}.i{font-style:italic}
  .red{color:#f00}
  .m{vertical-align:middle}
  td.w{white-space:normal;line-height:17px;padding-bottom:0}
  .y{background:#ff0;border-color:#ff0;box-shadow:-1px -1px 0 #ff0}
  .p{background:#ffc7ce;border-color:#ffc7ce;box-shadow:-1px -1px 0 #ffc7ce;color:#9c0006}
  .g{background:linear-gradient(135deg,#008000 50%,transparent 50%) 0 0/6px 6px no-repeat}
  .k{border-bottom-color:#000}
  .bx{border-bottom-color:#000}
  .bl{box-shadow:inset 1px 0 #000,inset 0 1px #000,inset 0 -1px #000,-1px 0 #000,-1px -1px #000,0 -1px #000}
  .br{border-right-color:#000;box-shadow:inset -1px 0 #000,inset 0 1px #000,inset 0 -1px #000,0 -1px #000}
  .clip div{display:flex;justify-content:flex-end;overflow:hidden;margin-left:-2px}
  .chart{position:absolute;left:1246px;top:508px}
  .snip{position:absolute;left:2219px;top:102px;width:174px;height:22px;padding-left:32px;font:11px/22px var(--ui);background:#e4f2fd90;color:#d3d6e2}
</style><table><colgroup></colgroup><thead><tr></tr></thead><tbody></tbody></table><line-chart class="chart"></line-chart><div class="snip">Window Snip</div>`, function (root) {
  root.querySelector('colgroup').innerHTML = [26, ...WIDTHS].map(w => `<col style="width:${w}px">`).join('') + '<col>';
  root.querySelector('thead tr').innerHTML = '<th></th>' + COLS.map(c => `<th>${c}</th>`).join('') + '<th></th>';
  let html = '';
  for (let r = 1; r <= 40; r++) {
    html += `<tr class="h${r === 4 ? 35 : r === 28 || r === 29 ? 21 : 20}"><th>${r}</th>`;
    for (let c = 0; c <= COLS.length; c++) {
      const cell = CELLS[COLS[c] + r];
      const ruled = (r === 12 || r === 13) && ((c >= 2 && c <= 11) || (c >= 13 && c <= 21)) ? ' k' : '';
      if (!cell) { html += `<td class="${ruled}"></td>`; continue; }
      const cls = cell.cls.replace('flag', cell.text === '1' ? 'p' : '') + ruled;
      const text = cls.includes('clip') ? `<div><span>${cell.text}</span></div>` : cell.text;
      html += `<td class="${cls}"${cell.span > 1 ? ` colspan="${cell.span}"` : ''}>${text}</td>`;
      c += cell.span - 1;
    }
    html += '</tr>';
  }
  root.querySelector('tbody').innerHTML = html;
});

component('v-scroll', `<style>${RESET}
  :host{display:flex;flex-direction:column;flex:none;width:20px;border-right:4px solid #c5d9f1;border-left:1px solid #5e80b0;background:linear-gradient(90deg,#6f92c4,#8dabd6)}
  .split{height:8px;border:1px solid #5e80b0;background:linear-gradient(#fff 3px,#6b8fb8 3px,#6b8fb8 4px,#fff 4px)}
  button{display:flex;justify-content:center;align-items:center;height:17px}
  .thumb{flex:0 0 61%;border:1px solid #4a638c;border-radius:2px;background:linear-gradient(90deg,#dde5ef,#eef1f5 35%,#b9c8dc 60%,#cdd8e6);display:flex;align-items:center;justify-content:center}
  .grip{width:8px;height:9px;background:repeating-linear-gradient(#66748c 0 1px,transparent 1px 3px)}
  .rest{flex:1}
</style><div class="split"></div><button aria-label="Sus"><xl-icon name="sup"></xl-icon></button><div class="thumb"><div class="grip"></div></div><div class="rest"></div><button aria-label="Jos"><xl-icon name="sdown"></xl-icon></button>`);

/* Sheet tabs */
component('sheet-tabs', `<style>${RESET}
  :host{display:flex;height:17px;background:linear-gradient(#8fabd5,#9fb9df);border-top:1px solid #8fb0dc;padding-right:20px}
  .left{display:flex;flex:0 0 1524px;min-width:0}
  .nav{display:flex;width:63px;background:#d5e4f7;align-items:center;justify-content:space-around;padding:0 3px}
  .nav button{display:flex}
  .tab{position:relative;z-index:0;height:16px;font-size:12px;line-height:16px;padding:0 8px 0 0;margin-left:-11px;text-align:center;color:#15428b;white-space:nowrap}
  .tab::before,.tab::after{content:"";position:absolute;inset:0;z-index:-1;clip-path:polygon(12px 0,100% 0,calc(100% - 12px) 100%,0 100%)}
  .tab::before{background:#6f8fc0}
  .tab::after{inset:0 1px 1px;background:linear-gradient(#f4f8fd,#c9dcf6 50%,#b9d1f2 51%,#dce9fa)}
  .first{margin-left:0;padding:0}
  .first::before,.first::after{clip-path:none}
  .on{margin-left:0;z-index:1;font-weight:700}
  .on::before,.on::after{clip-path:polygon(0 0,100% 0,calc(100% - 12px) 100%,0 100%)}
  .on::after{background:#fff}
  .tab xl-icon{margin-top:1px}
  .grab{width:7px;background:#fff;border:1px solid #5e80b0}
  .scroll{flex:1;display:flex;background:#7896c4}
  .scroll button{width:18px;display:flex;align-items:center;justify-content:center}
  .thumb{flex:0 0 90%;border:1px solid #4a638c;border-radius:2px;background:linear-gradient(#e8ecf1,#dde3ea 45%,#b3c2d6 55%,#a9bbd2);display:flex;align-items:center;justify-content:center}
  .grip{width:9px;height:8px;background:repeating-linear-gradient(90deg,#66748c 0 1px,transparent 1px 3px)}
  .rest{flex:1}
</style><div class="left"><div class="nav"><button aria-label="Prima"><xl-icon name="first"></xl-icon></button><button aria-label="Anterioara"><xl-icon name="prev"></xl-icon></button><button aria-label="Următoarea"><xl-icon name="next"></xl-icon></button><button aria-label="Ultima"><xl-icon name="last"></xl-icon></button></div>
<button class="tab first" style="width:134px">Logistic Regression</button><button class="tab on" style="width:193px">Removed line too little info</button><button class="tab" style="width:173px">With data from website</button><button class="tab" style="width:203px">With weights to reflect data</button><button class="tab" style="width:82px">raw data</button><button class="tab" style="width:46px;padding:0" aria-label="Foaie nouă"><xl-icon name="newsheet"></xl-icon></button></div>
<div class="grab"></div><div class="scroll"><button aria-label="Stânga"><xl-icon name="sleft"></xl-icon></button><div class="thumb"><div class="grip"></div></div><div class="rest"></div><button aria-label="Dreapta"><xl-icon name="sright"></xl-icon></button></div><div class="grab"></div>`);

/* Status bar */
component('status-bar', `<style>${RESET}
  :host{display:flex;height:22px;border-top:1px solid #567db1;background:linear-gradient(#fff 1px,#d9e7fb 1px,#cfe0f8 8px,#b3cdf3 9px,#c4d9f6 15px,#d9e8fa);align-items:stretch}
  .c{display:flex;align-items:center;border-right:1px solid #9dbbe3;box-shadow:1px 0 #e8f1fd}
  .end{margin-left:auto;display:flex;align-items:center;width:245px;padding-left:5px;border-left:1px solid #567db1;background:linear-gradient(#c5dbf7,#aac8f0 45%,#8fb4e6 50%,#9fc0ec)}
  .views{display:flex;border:1px solid #8aa9d6;height:19px;background:#bed3f0}
  .views button{width:18px;display:flex;align-items:center;justify-content:center}
  .views .on{background:linear-gradient(#fbd9a0,#fdc45a 50%,#ffe9a0)}
  .pct{width:44px;text-align:center}
  .rnd{display:flex;width:17px}
  input{appearance:none;flex:1;min-width:0;height:16px;background:linear-gradient(transparent 7px,#54749f 7px,#54749f 8px,#dce9fa 8px,#dce9fa 9px,transparent 9px)}
  input::-webkit-slider-thumb{appearance:none;width:9px;height:14px;background:#e6eefa;border:1px solid #3d5a86;border-radius:1px 1px 5px 5px}
</style><div class="c" style="width:76px;padding-left:7px">Gata</div><div class="c" style="width:34px;padding-left:8px"><xl-icon name="macro"></xl-icon></div>
<div class="end"><div class="views"><button class="on" aria-label="Normal"><xl-icon name="vnormal"></xl-icon></button><button aria-label="Aspect pagină"><xl-icon name="vpage"></xl-icon></button><button aria-label="Sfârșit de pagină"><xl-icon name="vbreak"></xl-icon></button></div><span class="pct">100%</span><button class="rnd" aria-label="Micșorare"><xl-icon name="minus"></xl-icon></button><input type="range" aria-label="Panoramare" min="0" max="200" value="100"><button class="rnd" aria-label="Mărire" style="margin-right:4px"><xl-icon name="plus"></xl-icon></button></div>`);

component('excel-window', `<style>${RESET}
  :host{display:flex;flex-direction:column;height:100vh;position:relative;overflow:hidden}
  .orb{position:absolute;left:3px;top:3px;display:flex}
  .line{height:1px;background:#6b8fb8}
  .main{flex:1;min-height:0;display:flex}
</style><title-bar></title-bar><ribbon-tabs></ribbon-tabs><ribbon-bar></ribbon-bar><formula-bar></formula-bar><div class="line"></div><div class="main"><work-sheet></work-sheet><v-scroll></v-scroll></div><sheet-tabs></sheet-tabs><status-bar></status-bar><button class="orb" aria-label="Butonul Office"><xl-icon name="office"></xl-icon></button>`);
</script>
</body>
</html>
